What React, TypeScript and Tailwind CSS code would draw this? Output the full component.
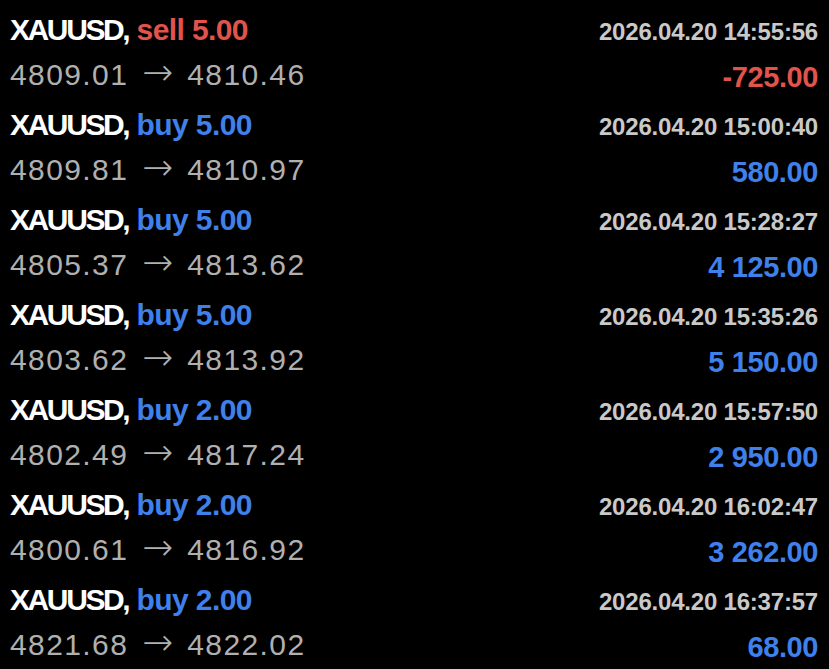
const deals = [
  { side: "sell", lots: "5.00", open: "4809.01", close: "4810.46", time: "2026.04.20 14:55:56", profit: "-725.00" },
  { side: "buy", lots: "5.00", open: "4809.81", close: "4810.97", time: "2026.04.20 15:00:40", profit: "580.00" },
  { side: "buy", lots: "5.00", open: "4805.37", close: "4813.62", time: "2026.04.20 15:28:27", profit: "4 125.00" },
  { side: "buy", lots: "5.00", open: "4803.62", close: "4813.92", time: "2026.04.20 15:35:26", profit: "5 150.00" },
  { side: "buy", lots: "2.00", open: "4802.49", close: "4817.24", time: "2026.04.20 15:57:50", profit: "2 950.00" },
  { side: "buy", lots: "2.00", open: "4800.61", close: "4816.92", time: "2026.04.20 16:02:47", profit: "3 262.00" },
  { side: "buy", lots: "2.00", open: "4821.68", close: "4822.02", time: "2026.04.20 16:37:57", profit: "68.00" },
];

export default function App() {
  return (
    <div className="w-[829px] h-[669px] overflow-hidden bg-black pt-[8px] pl-[10px] pr-[11px] font-['Liberation_Sans',Arial,sans-serif]">
      {deals.map((d, i) => {
        const color = d.side === "sell" ? "text-[#e0544b]" : "text-[#3f80ea]";
        return (
          <div key={i} className="h-[95px]">
            {/* Symbol, side and time */}
            <div className="flex h-[43px] items-baseline justify-between leading-[43px]">
              <span className="text-[30px] font-bold text-white">
                <span className="tracking-[-2.4px]">XAUUSD,</span>{" "}
                <span className={`tracking-[-0.6px] ${color}`}>{d.side} {d.lots}</span>
              </span>
              <span className="text-[24px] font-bold tracking-[-0.2px] text-[#c9c9c9]">{d.time}</span>
            </div>
            {/* Prices and profit */}
            <div className="flex h-[48px] items-baseline justify-between leading-[48px]">
              <span className="text-[30px] tracking-[1.4px] text-[#b0b0b0]">
                {d.open}
                <span className="mx-[14px] font-['DejaVu_Sans',sans-serif] text-[37px] font-extralight leading-none tracking-normal">→</span>
                {d.close}
              </span>
              <span className={`relative top-[2px] text-[29px] font-bold tracking-[-0.4px] ${color}`}>{d.profit}</span>
            </div>
          </div>
        );
      })}
    </div>
  );
}
